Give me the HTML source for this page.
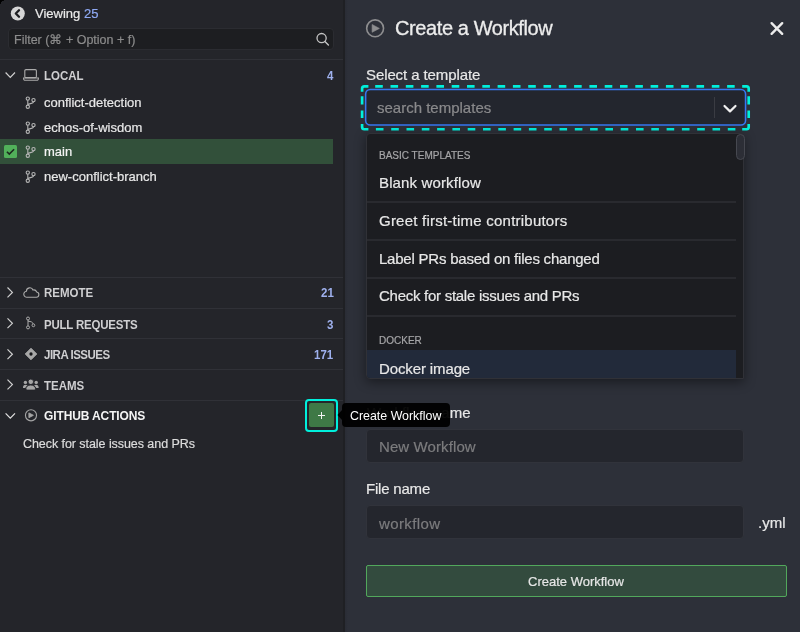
<!DOCTYPE html>
<html><head><meta charset="utf-8">
<style>
*{box-sizing:border-box;margin:0;padding:0}
html,body{width:800px;height:632px;overflow:hidden;background:#2d3039;font-family:"Liberation Sans",sans-serif;}
.abs{position:absolute}
.t{position:absolute;white-space:nowrap;line-height:1;will-change:transform}
.hr{position:absolute;left:0;width:344px;height:1px;background:#303137;}
.dv{position:absolute;left:367px;width:369px;height:2px;background:#292a2f;}
</style></head><body>
<div class="abs" style="left:0;top:0;width:345px;height:632px;background:#24252a"></div>
<div class="abs" style="left:0;top:0;width:4px;height:4px;background:radial-gradient(circle at 100% 100%, rgba(0,0,0,0) 3px, #000 3.6px)"></div>
<svg class="abs" style="left:10px;top:6px" width="15" height="15" viewBox="0 0 15 15"><circle cx="7.8" cy="7.5" r="7.0" fill="#d6d6d6"/><path d="M9 4.3 L5.8 7.5 L9 10.7" stroke="#1e1f22" stroke-width="2.3" fill="none" stroke-linecap="round" stroke-linejoin="round"/></svg>
<div class="t" style="left:35px;top:7px;font-size:13px;color:#eaeaea;-webkit-text-stroke:0.2px currentColor;">Viewing <span style="color:#8fa9f3">25</span></div>
<div class="abs" style="left:8px;top:28px;width:326px;height:22px;background:#1d1e21;border:1px solid #2b2c31;border-radius:4px"></div>
<div class="t" style="left:14px;top:34px;font-size:12.5px;color:#8c8c8c;-webkit-text-stroke:0.2px currentColor;">Filter (⌘ + Option + f)</div>
<svg class="abs" style="left:300px;top:24px" width="40" height="30" viewBox="0 0 40 30"><circle cx="21.6" cy="14.1" r="4.6" stroke="#c4c4c4" stroke-width="1.3" fill="none"/><path d="M24.9 17.4 L28.4 20.9" stroke="#c4c4c4" stroke-width="1.4" stroke-linecap="round"/></svg>
<div class="hr" style="top:59px"></div>
<svg class="abs" style="left:0;top:65px" width="20" height="20" viewBox="0 65 20 20"><path d="M5.6 72.50 L10.3 77.30 L15 72.50" stroke="#d0d0d0" stroke-width="1.2" fill="none"/></svg>
<svg class="abs" style="left:23px;top:69px" width="16" height="12" viewBox="0 0 16 12"><rect x="1.8" y="0.6" width="11.6" height="8" rx="1.2" stroke="#ababab" stroke-width="1.1" fill="none"/><path d="M0.6 9 H15.4 V9.8 a1.5 1.5 0 0 1 -1.5 1.5 H2.1 a1.5 1.5 0 0 1 -1.5 -1.5 Z" stroke="#ababab" stroke-width="1.1" fill="none"/></svg>
<div class="t" style="left:44px;top:71px;font-size:11.5px;color:#cfcfd1;font-weight:bold;transform:scaleY(1.1);transform-origin:0 9px;">LOCAL</div>
<div class="t" style="right:466.4px;top:71px;font-size:11.5px;color:#9fb1ee;font-weight:bold;transform:scaleY(1.1);transform-origin:0 9px">4</div>
<div class="abs" style="left:0;top:139px;width:333px;height:25px;background:#32503a"></div>
<svg class="abs" style="left:4px;top:145px" width="13" height="13" viewBox="0 0 13 13"><rect width="13" height="13" rx="1.5" fill="#51b05a"/><path d="M2.9 6.7 L5.3 9.1 L10.1 4.3" stroke="#1d2a1f" stroke-width="1.6" fill="none"/></svg>
<svg class="abs" style="left:25px;top:96px" width="12" height="14" viewBox="0 0 12 14"><g stroke="#b4b4b4" stroke-width="1.1" fill="none"><circle cx="2.8" cy="2.6" r="1.65"/><circle cx="2.8" cy="10.75" r="1.65"/><circle cx="8.5" cy="4.1" r="1.65"/><path d="M2.8 4.25 V9.1 M8.5 5.75 C8.5 7.9 2.8 7.4 2.8 9.1"/></g></svg>
<div class="t" style="left:44px;top:96px;font-size:13px;color:#e8e8e8;-webkit-text-stroke:0.2px currentColor;">conflict-detection</div>
<svg class="abs" style="left:25px;top:121px" width="12" height="14" viewBox="0 0 12 14"><g stroke="#b4b4b4" stroke-width="1.1" fill="none"><circle cx="2.8" cy="2.6" r="1.65"/><circle cx="2.8" cy="10.75" r="1.65"/><circle cx="8.5" cy="4.1" r="1.65"/><path d="M2.8 4.25 V9.1 M8.5 5.75 C8.5 7.9 2.8 7.4 2.8 9.1"/></g></svg>
<div class="t" style="left:44px;top:121px;font-size:13px;color:#e8e8e8;-webkit-text-stroke:0.2px currentColor;">echos-of-wisdom</div>
<svg class="abs" style="left:25px;top:145px" width="12" height="14" viewBox="0 0 12 14"><g stroke="#b4b4b4" stroke-width="1.1" fill="none"><circle cx="2.8" cy="2.6" r="1.65"/><circle cx="2.8" cy="10.75" r="1.65"/><circle cx="8.5" cy="4.1" r="1.65"/><path d="M2.8 4.25 V9.1 M8.5 5.75 C8.5 7.9 2.8 7.4 2.8 9.1"/></g></svg>
<div class="t" style="left:44px;top:145px;font-size:13px;color:#f4f4f4;-webkit-text-stroke:0.2px currentColor;">main</div>
<svg class="abs" style="left:25px;top:170px" width="12" height="14" viewBox="0 0 12 14"><g stroke="#b4b4b4" stroke-width="1.1" fill="none"><circle cx="2.8" cy="2.6" r="1.65"/><circle cx="2.8" cy="10.75" r="1.65"/><circle cx="8.5" cy="4.1" r="1.65"/><path d="M2.8 4.25 V9.1 M8.5 5.75 C8.5 7.9 2.8 7.4 2.8 9.1"/></g></svg>
<div class="t" style="left:44px;top:170px;font-size:13px;color:#e8e8e8;-webkit-text-stroke:0.2px currentColor;">new-conflict-branch</div>
<div class="hr" style="top:277px"></div>
<div class="hr" style="top:308px"></div>
<div class="hr" style="top:338px"></div>
<div class="hr" style="top:369px"></div>
<div class="hr" style="top:400px"></div>
<svg class="abs" style="left:0;top:282px" width="20" height="20" viewBox="0 282 20 20"><path d="M7.5 287.50 L12.4 292.40 L7.5 297.30" stroke="#d0d0d0" stroke-width="1.2" fill="none"/></svg>
<svg class="abs" style="left:20px;top:282px" width="22" height="22" viewBox="0 0 22 22"><path transform="translate(0.8 0.45)" d="M6.4 14.75 H15.6 A2.65 2.65 0 0 0 15.9 9.5 A3.2 3.2 0 0 0 12.2 7.6 A3.4 3.4 0 0 0 5.6 8.8 A3 3 0 0 0 6.4 14.75 Z" stroke="#ababab" stroke-width="1.1" fill="none"/></svg>
<div class="t" style="left:44px;top:288px;font-size:11.5px;color:#cfcfd1;font-weight:bold;transform:scaleY(1.1);transform-origin:0 9px;">REMOTE</div>
<div class="t" style="right:466.6px;top:288px;font-size:11.5px;color:#9fb1ee;font-weight:bold;transform:scaleY(1.1);transform-origin:0 9px">21</div>
<svg class="abs" style="left:0;top:313px" width="20" height="20" viewBox="0 313 20 20"><path d="M7.5 318.40 L12.4 323.30 L7.5 328.20" stroke="#d0d0d0" stroke-width="1.2" fill="none"/></svg>
<svg class="abs" style="left:25px;top:316px" width="11" height="14" viewBox="0 0 11 14"><g stroke="#ababab" stroke-width="1" fill="none"><circle cx="3" cy="2.5" r="1.5"/><circle cx="3" cy="11.4" r="1.5"/><circle cx="8.4" cy="9.3" r="1.4"/><path d="M3 4 V9.9 M3 5.2 Q7.6 5.4 8.1 7.9"/></g></svg>
<div class="t" style="left:44px;top:320px;font-size:11.5px;color:#cfcfd1;font-weight:bold;letter-spacing:-0.22px;transform:scaleY(1.1);transform-origin:0 9px;">PULL REQUESTS</div>
<div class="t" style="right:466.6px;top:320px;font-size:11.5px;color:#9fb1ee;font-weight:bold;transform:scaleY(1.1);transform-origin:0 9px">3</div>
<svg class="abs" style="left:0;top:344px" width="20" height="20" viewBox="0 344 20 20"><path d="M7.5 349.35 L12.4 354.25 L7.5 359.15" stroke="#d0d0d0" stroke-width="1.2" fill="none"/></svg>
<svg class="abs" style="left:20px;top:344px" width="22" height="22" viewBox="0 0 22 22"><path d="M11 4.2 L16.8 10 L11 15.8 L5.2 10 Z" fill="#a8a8a8" stroke="#a8a8a8" stroke-width="0.9" stroke-linejoin="round"/><circle cx="11" cy="10" r="1.65" fill="#141518"/></svg>
<div class="t" style="left:44px;top:350px;font-size:11.5px;color:#cfcfd1;font-weight:bold;letter-spacing:-0.5px;transform:scaleY(1.1);transform-origin:0 9px;">JIRA ISSUES</div>
<div class="t" style="right:466.8px;top:350px;font-size:11.5px;color:#9fb1ee;font-weight:bold;transform:scaleY(1.1);transform-origin:0 9px">171</div>
<svg class="abs" style="left:0;top:374px" width="20" height="20" viewBox="0 374 20 20"><path d="M7.5 379.65 L12.4 384.55 L7.5 389.45" stroke="#d0d0d0" stroke-width="1.2" fill="none"/></svg>
<svg class="abs" style="left:20px;top:374px" width="22" height="22" viewBox="0 0 22 22"><g fill="#a6a6a6"><circle cx="5.4" cy="8.4" r="1.7"/><circle cx="16.2" cy="8.4" r="1.7"/><path d="M3 14 V13.2 C3 11.8 4 10.7 5.4 10.7 C6.3 10.7 7 11 7.5 11.6 C6.5 12.3 5.7 13.1 5.4 14 Z"/><path d="M18.6 14 V13.2 C18.6 11.8 17.6 10.7 16.2 10.7 C15.3 10.7 14.6 11 14.1 11.6 C15.1 12.3 15.9 13.1 16.2 14 Z"/><circle cx="10.8" cy="7.8" r="2.75" stroke="#24252a" stroke-width="0.9"/><path d="M5.9 15 Q5.9 16.1 7 16.1 H14.4 Q15.5 16.1 15.5 15 V14.7 C15.5 12.6 13.4 11 10.7 11 C8 11 5.9 12.6 5.9 14.7 Z" stroke="#24252a" stroke-width="0.9"/></g></svg>
<div class="t" style="left:44px;top:381px;font-size:11.5px;color:#cfcfd1;font-weight:bold;transform:scaleY(1.1);transform-origin:0 9px;">TEAMS</div>
<svg class="abs" style="left:0;top:405px" width="20" height="20" viewBox="0 405 20 20"><path d="M5.6 413.30 L10.3 418.10 L15 413.30" stroke="#e2e2e2" stroke-width="1.2" fill="none"/></svg>
<svg class="abs" style="left:20px;top:404px" width="22" height="22" viewBox="0 0 22 22"><circle cx="11" cy="11.3" r="5.55" stroke="#a4a4a4" stroke-width="1.15" fill="none"/><path d="M8.9 8.9 L13.4 11.3 L8.9 13.7 Z" fill="#a4a4a4" stroke="#a4a4a4" stroke-width="0.9" stroke-linejoin="round"/></svg>
<div class="t" style="left:44px;top:410px;font-size:12px;color:#f4f4f4;font-weight:bold;letter-spacing:-0.12px;transform:scaleY(1.06);transform-origin:0 10px;">GITHUB ACTIONS</div>
<div class="t" style="left:23px;top:438px;font-size:12.5px;color:#dcdcdc;-webkit-text-stroke:0.2px currentColor;letter-spacing:-0.06px;">Check for stale issues and PRs</div>
<div class="abs" style="left:305px;top:399px;width:32.6px;height:32.6px;border:2.6px solid #00f0dc;border-radius:4px"></div>
<div class="abs" style="left:308.8px;top:402.8px;width:25.2px;height:24.6px;background:#3e7946;border-radius:2px"></div>
<div class="abs" style="left:321px;top:412px;width:1.2px;height:7px;background:#f4f4f4"></div><div class="abs" style="left:318px;top:415px;width:7px;height:1.2px;background:#f4f4f4"></div>
<div class="abs" style="left:343px;top:0;width:2px;height:632px;background:#1f2024"></div>
<div class="abs" style="left:345px;top:0;width:3px;height:632px;background:linear-gradient(to right,rgba(0,0,0,0.08),rgba(0,0,0,0))"></div>
<svg class="abs" style="left:360px;top:10px" width="30" height="30" viewBox="0 0 30 30"><circle cx="15.1" cy="18.3" r="8.45" stroke="#8e8e90" stroke-width="1.6" fill="none"/><path d="M12.1 14.5 L19.4 18.4 L12.1 22.3 Z" fill="#8e8e90" stroke="#8e8e90" stroke-width="0.6" stroke-linejoin="round"/></svg>
<div class="t" style="left:395px;top:18px;font-size:20px;color:#ececec;-webkit-text-stroke:0.2px currentColor;letter-spacing:-0.4px;-webkit-text-stroke:0.3px currentColor;">Create a Workflow</div>
<svg class="abs" style="left:760px;top:12px" width="30" height="30" viewBox="0 0 30 30"><path d="M11.6 11.2 L22.2 21.8 M22.2 11.2 L11.6 21.8" stroke="#ececec" stroke-width="2.4" stroke-linecap="round"/></svg>
<div class="t" style="left:366px;top:67px;font-size:15px;color:#e8e8e8;-webkit-text-stroke:0.2px currentColor;letter-spacing:-0.1px;">Select a template</div>
<svg class="abs" style="left:0;top:0" width="800" height="632" viewBox="0 0 800 632"><path d="M362.1 91.8 V88.5 A2.2 2.2 0 0 1 364.3 86.3 H368.4 M748.7 91.8 V88.5 A2.2 2.2 0 0 0 746.5 86.3 H742.2 M362.1 124 V126.99999999999999 A2.2 2.2 0 0 0 364.3 129.2 H368.4 M748.7 124 V126.99999999999999 A2.2 2.2 0 0 1 746.5 129.2 H742.2 M375.20 86.3 H382.80 M375.90 129.2 H383.50 M390.50 86.3 H398.10 M391.20 129.2 H398.80 M405.80 86.3 H413.40 M406.50 129.2 H414.10 M421.10 86.3 H428.70 M421.80 129.2 H429.40 M436.40 86.3 H444.00 M437.10 129.2 H444.70 M451.70 86.3 H459.30 M452.40 129.2 H460.00 M467.00 86.3 H474.60 M467.70 129.2 H475.30 M482.30 86.3 H489.90 M483.00 129.2 H490.60 M497.60 86.3 H505.20 M498.30 129.2 H505.90 M512.90 86.3 H520.50 M513.60 129.2 H521.20 M528.20 86.3 H535.80 M528.90 129.2 H536.50 M543.50 86.3 H551.10 M544.20 129.2 H551.80 M558.80 86.3 H566.40 M559.50 129.2 H567.10 M574.10 86.3 H581.70 M574.80 129.2 H582.40 M589.40 86.3 H597.00 M590.10 129.2 H597.70 M604.70 86.3 H612.30 M605.40 129.2 H613.00 M620.00 86.3 H627.60 M620.70 129.2 H628.30 M635.30 86.3 H642.90 M636.00 129.2 H643.60 M650.60 86.3 H658.20 M651.30 129.2 H658.90 M665.90 86.3 H673.50 M666.60 129.2 H674.20 M681.20 86.3 H688.80 M681.90 129.2 H689.50 M696.50 86.3 H704.10 M697.20 129.2 H704.80 M711.80 86.3 H719.40 M712.50 129.2 H720.10 M727.10 86.3 H734.70 M727.80 129.2 H735.40 M362.1 96.3 V104.6 M748.7 96.3 V104.6 M362.1 110.6 V118.0 M748.7 110.6 V118.0 " stroke="#00f0dc" stroke-width="2.65" fill="none"/></svg>
<svg class="abs" style="left:0;top:0" width="800" height="140" viewBox="0 0 800 140"><rect x="365.65" y="89.5" width="379.9" height="35.5" rx="4.6" fill="#23262e" stroke="#3777f2" stroke-width="1.55"/></svg>
<div class="t" style="left:377px;top:100px;font-size:15px;color:#8a8a8c;-webkit-text-stroke:0.2px currentColor;">search templates</div>
<div class="abs" style="left:714px;top:97px;width:1px;height:21px;background:#3a3c43"></div>
<svg class="abs" style="left:722px;top:102.8px" width="16" height="12" viewBox="0 0 16 12"><path d="M2.5 3 L8 8.4 L13.5 3" stroke="#f0f0f0" stroke-width="2.2" fill="none" stroke-linecap="round" stroke-linejoin="round"/></svg>
<div class="abs" style="left:366px;top:133px;width:378px;height:246px;background:#1c1d21;border:1px solid #303137;border-radius:4px 4px 0 4px;box-shadow:0 3px 12px rgba(0,0,0,0.45)"></div>
<div class="abs" style="left:736px;top:133.7px;width:8.6px;height:26.3px;background:#2c2e36;border:1px solid #464850;border-radius:4.5px"></div>
<div class="t" style="left:379px;top:151px;font-size:10px;color:#a6a6a8;-webkit-text-stroke:0.2px currentColor;">BASIC TEMPLATES</div>
<div class="t" style="left:379px;top:175px;font-size:15px;color:#e8e8e8;-webkit-text-stroke:0.2px currentColor;letter-spacing:0.14px;">Blank workflow</div>
<div class="dv" style="top:201px"></div>
<div class="t" style="left:379px;top:213px;font-size:15px;color:#e8e8e8;-webkit-text-stroke:0.2px currentColor;letter-spacing:0.23px;">Greet first-time contributors</div>
<div class="dv" style="top:239px"></div>
<div class="t" style="left:379px;top:251px;font-size:15px;color:#e8e8e8;-webkit-text-stroke:0.2px currentColor;letter-spacing:-0.22px;">Label PRs based on files changed</div>
<div class="dv" style="top:277px"></div>
<div class="t" style="left:379px;top:288px;font-size:15px;color:#e8e8e8;-webkit-text-stroke:0.2px currentColor;letter-spacing:-0.27px;">Check for stale issues and PRs</div>
<div class="dv" style="top:315px"></div>
<div class="t" style="left:379px;top:336px;font-size:10px;color:#a6a6a8;-webkit-text-stroke:0.2px currentColor;">DOCKER</div>
<div class="abs" style="left:367px;top:350px;width:369px;height:28px;background:#222a3a;border-bottom-left-radius:3px"></div>
<div class="t" style="left:379px;top:361px;font-size:15px;color:#e8e8e8;-webkit-text-stroke:0.2px currentColor;letter-spacing:-0.12px;">Docker image</div>
<div class="t" style="left:367.0px;top:405px;font-size:15px;color:#e8e8e8;-webkit-text-stroke:0.2px currentColor;letter-spacing:0.04px;">Workflow name</div>
<div class="abs" style="left:366px;top:429px;width:377.5px;height:34px;background:#24262d;border:1px solid #31333b;border-radius:4px"></div>
<div class="t" style="left:379px;top:439px;font-size:15px;color:#7c7c7e;-webkit-text-stroke:0.2px currentColor;letter-spacing:0.1px;">New Workflow</div>
<div class="t" style="left:366px;top:481px;font-size:15px;color:#e8e8e8;-webkit-text-stroke:0.2px currentColor;letter-spacing:-0.2px;">File name</div>
<div class="abs" style="left:366px;top:505px;width:377.5px;height:34px;background:#24262d;border:1px solid #31333b;border-radius:4px"></div>
<div class="t" style="left:379px;top:516px;font-size:15px;color:#7c7c7e;-webkit-text-stroke:0.2px currentColor;letter-spacing:0.4px;">workflow</div>
<div class="t" style="left:758px;top:515px;font-size:15px;color:#e8e8e8;-webkit-text-stroke:0.2px currentColor;">.yml</div>
<div class="abs" style="left:365.5px;top:565px;width:421px;height:32px;background:#334b3e;border:1.5px solid #52a85c;border-radius:2px"></div>
<div class="t" style="left:528px;top:575px;font-size:13px;color:#e6e6e6;-webkit-text-stroke:0.2px currentColor;">Create Workflow</div>
<svg class="abs" style="left:337px;top:410px" width="5" height="10" viewBox="0 0 5 10"><path d="M5 0 L0.5 5 L5 10 Z" fill="rgba(0,0,0,0.95)"/></svg>
<div class="abs" style="left:342px;top:403px;width:107.6px;height:23.5px;background:rgba(0,0,0,0.95);border-radius:4px"></div>
<div class="t" style="left:350px;top:410px;font-size:12.4px;color:#ffffff;-webkit-text-stroke:0.2px currentColor;-webkit-text-stroke:0;">Create Workflow</div>
</body></html>
